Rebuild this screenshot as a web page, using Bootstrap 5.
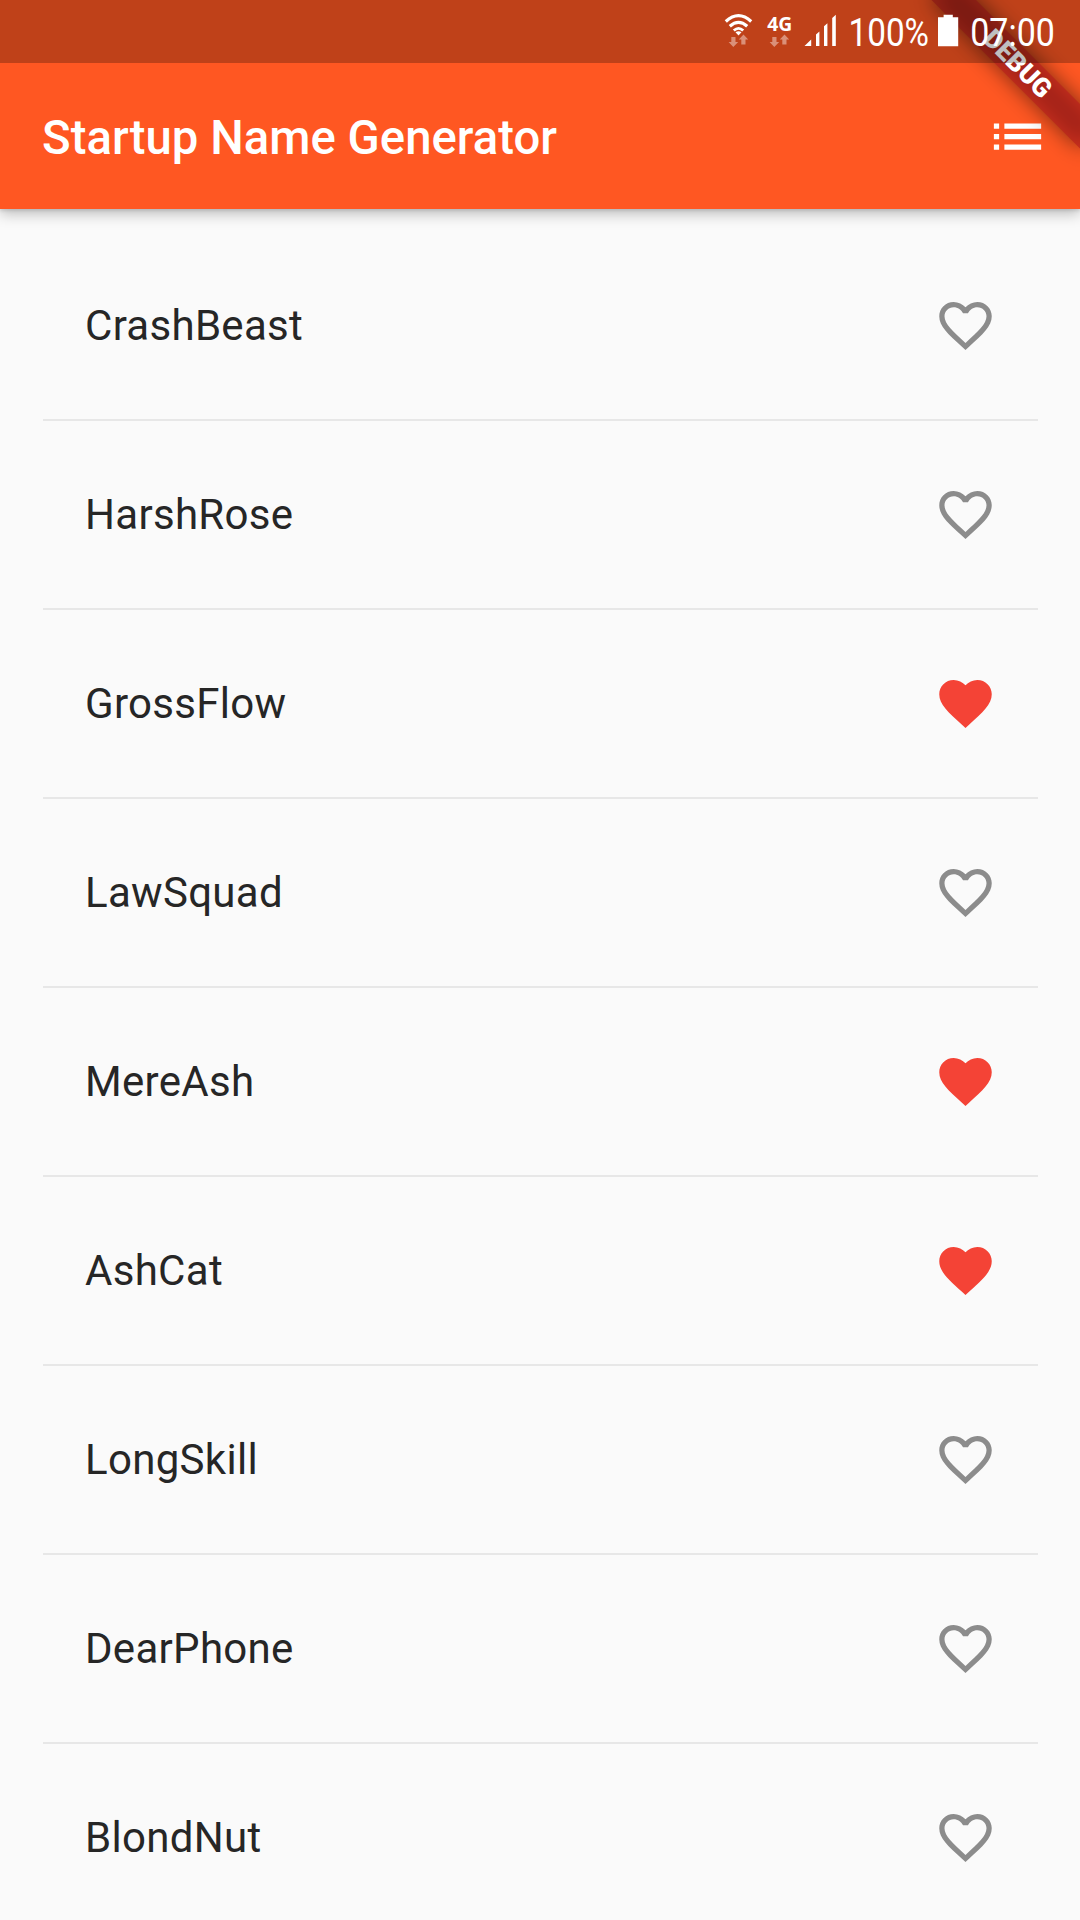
<!DOCTYPE html>
<html lang="en">
<head>
<meta charset="utf-8">
<meta name="viewport" content="width=device-width, initial-scale=1">
<title>Startup Name Generator</title>
<link href="https://cdn.jsdelivr.net/npm/bootstrap@5.3.0/dist/css/bootstrap.min.css" rel="stylesheet">
<style>
  body { background: #fafafa; font-family: Roboto, "Noto Sans", sans-serif; color: #262626; }
  .screen { width: 1080px; height: 1920px; background: #fafafa; }
  .app-header { height: 209.4px; background: #ff5722; box-shadow: 0 5px 13px rgba(0,0,0,.24), 0 2px 3px rgba(0,0,0,.1); z-index: 2; }
  .status-strip { height: 62.6px; background: rgba(0,0,0,.25); z-index: 3; }
  .status-strip svg, .ribbon, .icon24 { display: block; }
  .app-toolbar { height: 147px; padding: 0 31.5px 0 42px; }
  .app-title { font-size: 47.25px; line-height: 56px; font-weight: 500; letter-spacing: .03px; margin: 0; padding-top: 3px; }
  .icon24 { width: 63px; height: 63px; fill: currentColor; }
  .ribbon { z-index: 2; }
  .names { padding: 42.6px 42px 0; }
  .name-tile { height: 147px; padding: 0 41.5px 0 43px; font-size: 42px; line-height: 50px; letter-spacing: .3px; }
  .name-tile span { padding-top: 1px; }
  .name-rule { height: 42px; padding: 19.8px 0 0 .7px; }
  .name-rule::before { content: ""; display: block; height: 2px; background: #e7e7e7; }
  .heart-off { color: #8c8c8c; }
  .heart-on { color: #f44336; }
</style>
</head>
<body>
<svg class="d-none" aria-hidden="true">
  <symbol id="heart-outline" viewBox="0 0 24 24"><path d="M16.5 3c-1.74 0-3.41.81-4.5 2.09C10.91 3.81 9.24 3 7.5 3 4.42 3 2 5.42 2 8.5c0 3.78 3.4 6.86 8.55 11.54L12 21.35l1.45-1.32C18.6 15.36 22 12.28 22 8.5 22 5.42 19.58 3 16.5 3zm-4.4 15.55l-.1.1-.1-.1C7.14 14.24 4 11.39 4 8.5 4 6.5 5.5 5 7.5 5c1.54 0 3.04.99 3.57 2.36h1.87C13.46 5.99 14.96 5 16.5 5c2 0 3.5 1.5 3.5 3.5 0 2.89-3.14 5.74-7.9 10.05z"/></symbol>
  <symbol id="heart-full" viewBox="0 0 24 24"><path d="M12 21.35l-1.45-1.32C5.4 15.36 2 12.28 2 8.5 2 5.42 4.42 3 7.5 3c1.74 0 3.41.81 4.5 2.09C13.09 3.81 14.76 3 16.5 3 19.58 3 22 5.42 22 8.5c0 3.78-3.4 6.86-8.55 11.54L12 21.35z"/></symbol>
</svg>
<div class="screen position-relative overflow-hidden">
  <header class="app-header position-relative text-white">
    <div class="status-strip position-relative d-flex justify-content-end">
      <svg width="370" height="62" viewBox="710 0 370 62" fill="#fff">
        <!-- wifi -->
        <g fill="none" stroke="#fff" stroke-width="3.2">
          <path d="M725.8 21.5Q738.5 9.9 751.2 21.5"/>
          <path d="M729.8 26.2Q738.5 18.5 747.2 26.2"/>
          <path d="M733.8 30.6Q738.5 26.2 743.2 30.6" stroke-width="2.8"/>
        </g>
        <path d="M738.5 35.4l-3-3.1q3-2.2 6 0z"/>
        <!-- traffic arrows -->
        <g fill-opacity=".42">
          <path id="traffic" d="M731.3 37h4.2v5h2.7l-4.9 5-4.7-5h2.7zM743.5 34.6l4.7 5h-2.7v5h-4.2v-5h-2.5z"/>
          <use href="#traffic" x="41"/>
        </g>
        <text x="767.3" y="30.6" font-family="Open Sans" font-weight="700" font-size="19" textLength="25" lengthAdjust="spacingAndGlyphs">4G</text>
        <!-- signal -->
        <path d="M804.5 46l6.7-6.5V46zM816 46V34.5l3.4-3V46zM824 46V26.3l3.4-3V46zM832.2 46V18l3.6-3.3V46z"/>
        <text x="848.5" y="46" font-size="39.5" textLength="80.5" lengthAdjust="spacingAndGlyphs">100%</text>
        <path d="M938 46.2V17.2h5.6v-2.4h9.2v2.4h5.4v29z"/>
        <text x="970.3" y="46" font-size="39.5" textLength="84.5" lengthAdjust="spacingAndGlyphs">07:00</text>
      </svg>
    </div>
    <div class="app-toolbar d-flex align-items-center justify-content-between">
      <h1 class="app-title">Startup Name Generator</h1>
      <svg class="icon24" viewBox="0 0 24 24"><path d="M3 13h2v-2H3v2zm0 4h2v-2H3v2zm0-8h2V7H3v2zm4 4h14v-2H7v2zm0 4h14v-2H7v2zM7 7v2h14V7H7z"/></svg>
    </div>
    <svg class="ribbon position-absolute top-0 end-0" width="240" height="240" viewBox="-240 0 240 240">
      <defs><filter id="soft" x="-30%" y="-150%" width="160%" height="400%"><feGaussianBlur stdDeviation="10.4"/></filter></defs>
      <g transform="rotate(45)">
        <rect x="-105" y="73.5" width="210" height="31.5" fill="#000" fill-opacity=".5" filter="url(#soft)"/>
        <rect x="-105" y="73.5" width="210" height="31.5" fill="#b71c1c" fill-opacity=".627"/>
        <text x="1" y="98" text-anchor="middle" font-size="26.4" font-weight="900" fill="#fff">DEBUG</text>
      </g>
    </svg>
  </header>
  <main class="names" id="names"></main>
</div>
<script src="https://cdn.jsdelivr.net/npm/bootstrap@5.3.0/dist/js/bootstrap.bundle.min.js"></script>
<script>
  const names = [["CrashBeast", 0], ["HarshRose", 0], ["GrossFlow", 1], ["LawSquad", 0], ["MereAsh", 1],
                 ["AshCat", 1], ["LongSkill", 0], ["DearPhone", 0], ["BlondNut", 0]];
  document.getElementById("names").innerHTML = names.map(([name, saved]) =>
    `<div class="name-tile d-flex align-items-center justify-content-between"><span>${name}</span>
       <svg class="icon24 ${saved ? "heart-on" : "heart-off"}"><use href="#${saved ? "heart-full" : "heart-outline"}"/></svg></div>`
  ).join('<div class="name-rule"></div>');
</script>
</body>
</html>
